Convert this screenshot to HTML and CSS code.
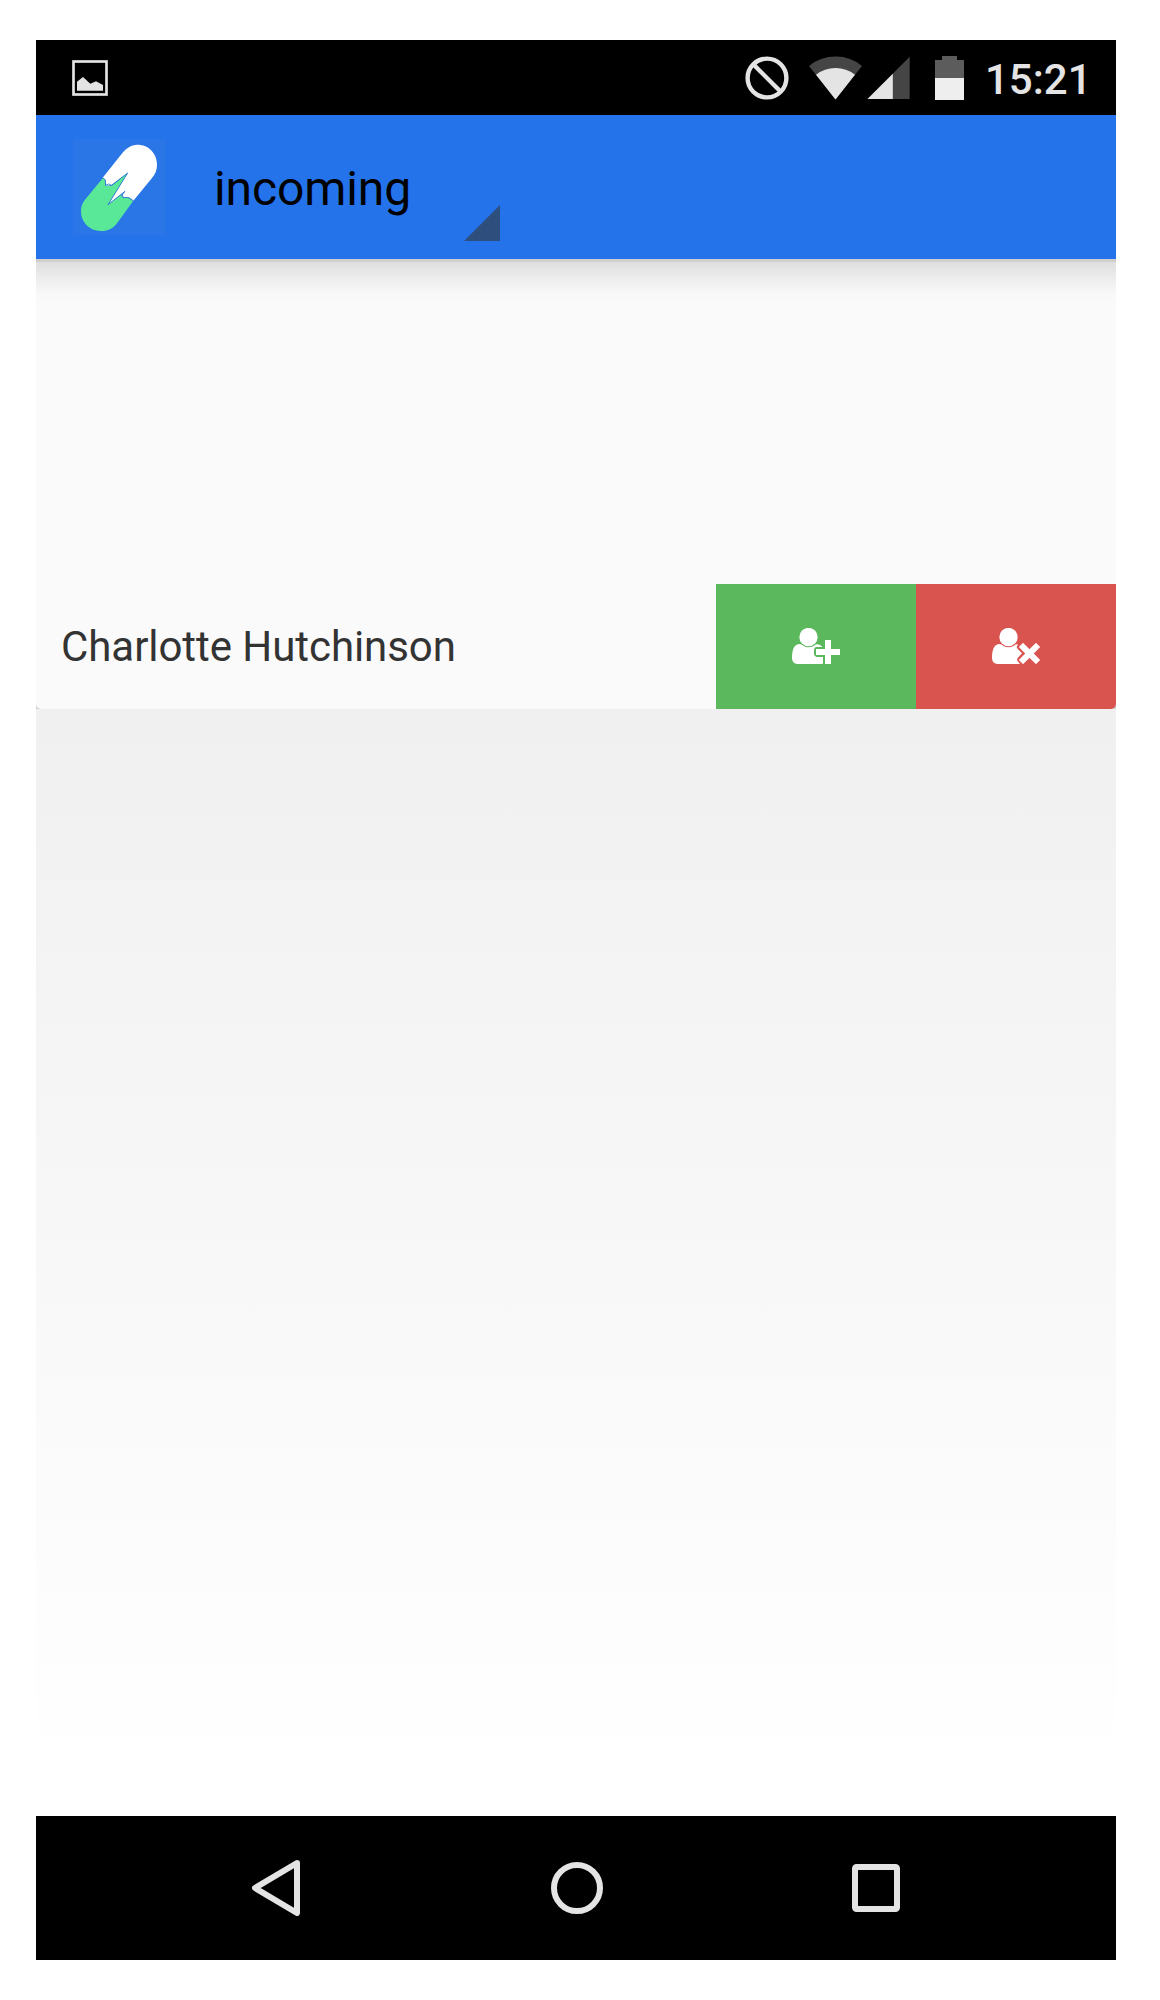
FILE: index.html
```html
<!DOCTYPE html>
<html lang="en">
<head>
<meta charset="utf-8">
<title>incoming</title>
<link rel="stylesheet" href="styles.css">
</head>
<body>
<main class="screen">
  <header class="status">
    <svg class="status-picture" width="36" height="36" viewBox="0 0 108 108"><rect x="4.5" y="4.5" width="99" height="99" fill="none" stroke="#e4e4e4" stroke-width="8"/><path d="M15 92V65L33 51L55 71L72 64L93 75V92Z" fill="#e4e4e4"/></svg>
    <svg width="44" height="44" viewBox="0 0 44 44" fill="none" stroke="#e4e4e4" stroke-width="4.4"><circle cx="22" cy="22" r="19.4"/><path d="M8.5 8.5L35.5 35.5"/></svg>
    <svg class="status-wifi" width="53" height="44" viewBox="0 0 53 44"><path d="M0 10Q11 .5 26.5 .5T53 10L26.500 43.500Z" fill="#454545"/><path d="M7 18.700Q15.500 12 26.500 12T46 18.700L26.500 43.500Z" fill="#e4e4e4"/></svg>
    <svg class="status-signal" width="43" height="44" viewBox="0 0 43 44"><path d="M.5 43L42.700 .7V43Z" fill="#454545"/><path d="M.5 43L25.800 17.700V43Z" fill="#e4e4e4"/></svg>
    <svg class="status-battery" width="29" height="44" viewBox="0 0 29 44"><path d="M0 4H7V0H22V4H29V22H0Z" fill="#5c5c5c"/><path d="M0 22H29V44H0Z" fill="#eee"/></svg>
    <span class="clock">15:21</span>
  </header>
  <section class="toolbar">
    <svg class="logo" width="93" height="96" viewBox="39 87 279 288">
      <path d="M128 203L183 134C198 115 213 104 232 104C266 104 291 130 291 164C291 180 286 192 276 204L220 272L207 263L188 261L187 254L195 244L144 284L203 189L154 225L138 227L137 210Z" fill="#fff"/>
      <path d="M128 205L76 268C66 280 63 291 63 304C63 337 89 363 122 363C144 363 158 356 170 341L219 274L207 265L186 262L184 254L193 247L144 284L202 190L155 227L136 227L135 209Z" fill="#59e897"/>
      <path d="M129 204L136 210L137 226L146 222L155 226L203 189L144 284L195 244L187 254L189 262L207 263L220 272" fill="none" stroke="#2b78cf" stroke-width="2.500"/>
    </svg>
    <div class="spinner">
      <span>incoming</span>
      <svg width="36" height="36" viewBox="0 0 36 36"><path d="M0 36L36 0V36Z" fill="#2e4f7d"/></svg>
    </div>
  </section>
  <section class="panel">
    <div class="request">
      <span class="name">Charlotte Hutchinson</span>
      <button class="action accept" aria-label="Accept">
        <svg width="48" height="36" viewBox="276 174 144 108" fill="#fff"><circle cx="325.500" cy="201" r="27.500"/><path d="M299 222Q305 222 310 227Q325 236 342 227Q349 220 358 224Q364 227 367 231H348Q342 233 342 239V253Q343 260 350 261H369V281Q365 282 360 282H291Q276 280 276 264Q276 222 299 222Z"/><path d="M375 210H393V237H420V255H393V282H375V255H348V237H375Z"/></svg>
      </button>
      <button class="action reject" aria-label="Reject">
        <svg width="48" height="36" viewBox="876 174 144 108" fill="#fff"><circle cx="925.500" cy="201" r="27.500"/><path d="M899 222Q905 222 910 227Q925 236 942 227Q947 222 954 223L950 231Q951 235 954 238L966 250L953 264Q950 269 953 274L960 281Q956 282 950 282H891Q876 280 876 264Q876 222 899 222Z"/><path d="M969 219L988.500 238L1008 219L1020 231L1001 250.500L1020 270L1008 282L988.500 263L969 282L957 270L976 250.500L957 231Z" stroke="#fff" stroke-linejoin="round"/></svg>
      </button>
    </div>
  </section>
  <section class="backdrop"></section>
  <nav class="navbar">
    <svg width="50" height="56" viewBox="0 0 50 56"><path d="M46 3L4 28L46 53Z"/></svg>
    <svg width="52" height="52" viewBox="0 0 52 52"><circle cx="26" cy="26" r="23"/></svg>
    <svg width="48" height="48" viewBox="0 0 48 48"><rect x="3" y="3" width="42" height="42" rx="1.500"/></svg>
  </nav>
</main>
</body>
</html>
```
FILE: styles.css
```css
* { box-sizing: border-box; }
body {
  margin: 0;
  padding: 40px 44px 40px 36px;
  background: #fff;
  font-family: Roboto, "Liberation Sans", sans-serif;
}
svg { display: block; flex: none; }
.screen { width: 1080px; height: 1920px; display: flex; flex-direction: column; }
.status {
  height: 75px;
  flex: none;
  display: flex;
  align-items: center;
  padding: 0 27px 0 36px;
  background: #000;
}
.status-picture { margin-right: auto; }
.status-wifi { margin-left: 20px; }
.status-signal { margin-left: 5px; }
.status-battery { margin-left: 25px; }
.clock {
  width: 104px;
  margin-left: 21px;
  color: #e4e4e4;
  font-size: 42px;
  font-weight: 500;
  line-height: 50px;
  padding-top: 4px;
  white-space: nowrap;
}
.toolbar {
  height: 144px;
  flex: none;
  display: flex;
  align-items: center;
  padding-left: 37px;
  background: #2473eb;
}
.logo { background: #2a76e7; }
.spinner {
  display: flex;
  align-items: flex-end;
  justify-content: space-between;
  width: 286px;
  height: 108px;
  margin-left: 48px;
  color: #000;
  font-size: 48px;
}
.spinner span { line-height: 56px; padding-bottom: 24px; letter-spacing: -.1px; }
.panel {
  height: 450px;
  flex: none;
  display: flex;
  align-items: flex-end;
  background: linear-gradient(#cfcfcf 3px, #dedede 3px, #ececec 18px, #f8f8f8 34px, #fafafa 44px);
}
.request {
  width: 100%;
  height: 125px;
  display: flex;
  align-items: center;
  background: #fafafa;
  border-radius: 0 0 5px 5px;
  box-shadow: 0 0 0 5px #d0d0d0;
  clip-path: inset(0);
}
.name { flex: 1; padding-left: 25px; color: #333; font-size: 42px; line-height: 50px; letter-spacing: -.06px; }
.action {
  width: 200px;
  height: 125px;
  padding: 0 0 2px;
  border: 0;
  display: grid;
  place-items: center;
}
.accept { background: #5cb85c; }
.reject { background: #d9534f; border-bottom-right-radius: 5px; }
.backdrop { flex: 1; background: linear-gradient(#f0f0f0, #fff 1060px); }
.navbar {
  height: 144px;
  flex: none;
  display: flex;
  align-items: center;
  justify-content: space-between;
  padding: 0 216px 0 215px;
  background: #000;
}
.navbar svg { fill: none; stroke: #e4e4e4; stroke-width: 6; stroke-linejoin: round; }
```
